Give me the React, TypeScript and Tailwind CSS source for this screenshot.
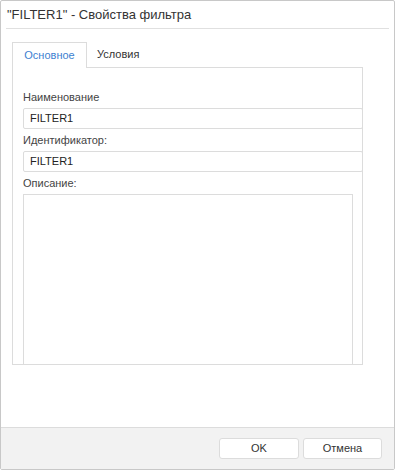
import React from "react";

const FONT = { fontFamily: '"Liberation Sans", Arial, sans-serif' };

function Field({ label, value }: { label: string; value: string }) {
  return (
    <>
      <div className="h-[14px] text-[11px] leading-[14px] text-[#444]">{label}</div>
      <div className="mt-[4px] flex h-[21px] w-[340px] items-center rounded-[2px] border border-[#dcdcdc] bg-white pl-[6px] text-[11px] text-[#222]">
        {value}
      </div>
    </>
  );
}

// Диалог свойств фильтра — заголовок, вкладки, поля и нижняя панель кнопок.
export default function App() {
  return (
    <div style={FONT} className="flex h-[470px] w-[395px] flex-col rounded-[2px] border border-[#c8c8c8] bg-white">
      {/* заголовок */}
      <div className="mx-[5px] flex h-[28px] items-center border-b border-[#e0e0e0] pl-[1px] text-[13px] text-[#333]">
        "FILTER1" - Свойства фильтра
      </div>

      {/* вкладки + содержимое */}
      <div className="flex-1 pl-[11px] pt-[13px]">
        <div className="flex items-end">
          <div className="relative z-10 -mb-px flex h-[26px] w-[75px] items-center justify-center border border-b-0 border-[#dcdcdc] bg-white text-[11px] text-[#3d7fd1]">
            Основное
          </div>
          <div className="flex h-[25px] items-center px-[10px] text-[11px] text-[#333]">Условия</div>
        </div>
        <div className="h-[298px] w-[351px] border border-[#dcdcdc] pl-[10px] pt-[22px]">
          <Field label="Наименование" value="FILTER1" />
          <div className="mt-[4px]">
            <Field label="Идентификатор:" value="FILTER1" />
          </div>
          <div className="mt-[4px] h-[14px] text-[11px] leading-[14px] text-[#444]">Описание:</div>
          <div className="mt-[4px] h-[170px] w-[330px] border border-b-0 border-[#dcdcdc] bg-white" />
        </div>
      </div>

      {/* кнопки */}
      <div className="flex h-[42px] items-start justify-end gap-[4px] border-t border-[#dcdcdc] bg-[#f2f2f2] pr-[12px] pt-[10px]">
        <button type="button" className="h-[21px] w-[80px] rounded-[3px] border border-[#dcdcdc] bg-white text-[11px] text-[#333]">
          OK
        </button>
        <button type="button" className="h-[21px] w-[79px] rounded-[3px] border border-[#dcdcdc] bg-white text-[11px] text-[#333]">
          Отмена
        </button>
      </div>
    </div>
  );
}
